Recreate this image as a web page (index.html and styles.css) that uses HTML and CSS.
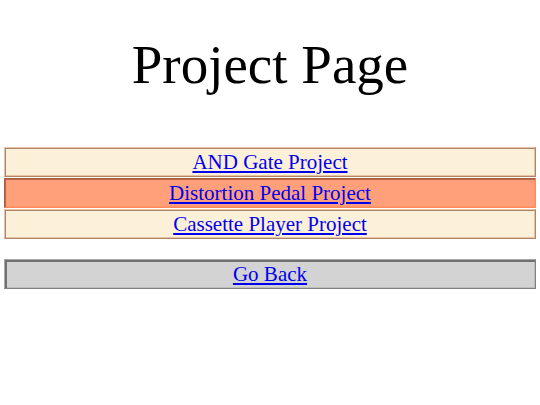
FILE: index.html
```html
<!DOCTYPE html>
<html>
<head>
<meta charset="utf-8">
<title>Project Page</title>
<link rel="stylesheet" href="styles.css">
</head>
<body>
<h1 class="title">Project Page</h1>
<div class="projects">
  <div class="item"><a href="#">AND Gate Project</a></div>
  <div class="item active"><a href="#">Distortion Pedal Project</a></div>
  <div class="item"><a href="#">Cassette Player Project</a></div>
</div>
<div class="back"><a href="#">Go Back</a></div>
</body>
</html>
```

FILE: styles.css
```css
html, body {
  margin: 0;
  padding: 0;
  background: #ffffff;
}
body {
  padding: 0 4px;
  font-family: "Liberation Serif", "Times New Roman", serif;
}
.title {
  margin: 34px 0 0 0;
  height: 113px;
  font-size: 55px;
  font-weight: normal;
  text-align: center;
  line-height: 62px;
}
.projects {
  display: flex;
  flex-direction: column;
  gap: 1px;
}
.item, .back {
  text-align: center;
  font-size: 21px;
  line-height: 24px;
  padding: 2px 0;
  border: 1px solid;
  border-color: #e6c3a5 #b08468 #b08468 #e6c3a5;
  box-shadow: inset 1px 1px 0 #b08468, inset -1px -1px 0 #e6c3a5;
  background: #fcf0d8;
}
.item.active {
  background: #ffa07a;
  border-color: #a8603e #ff8a5c #ff8a5c #a8603e;
  box-shadow: inset 1px 1px 0 #b8684a, inset -1px -1px 0 #ff9468;
}
.back {
  margin-top: 20px;
  background: #d3d3d3;
  border-color: #a8a8a8 #808080 #808080 #a8a8a8;
  box-shadow: inset 2px 2px 0 #707070, inset -1px -1px 0 #bdbdbd;
}
a {
  color: #0000ee;
  text-decoration: underline;
}
```
